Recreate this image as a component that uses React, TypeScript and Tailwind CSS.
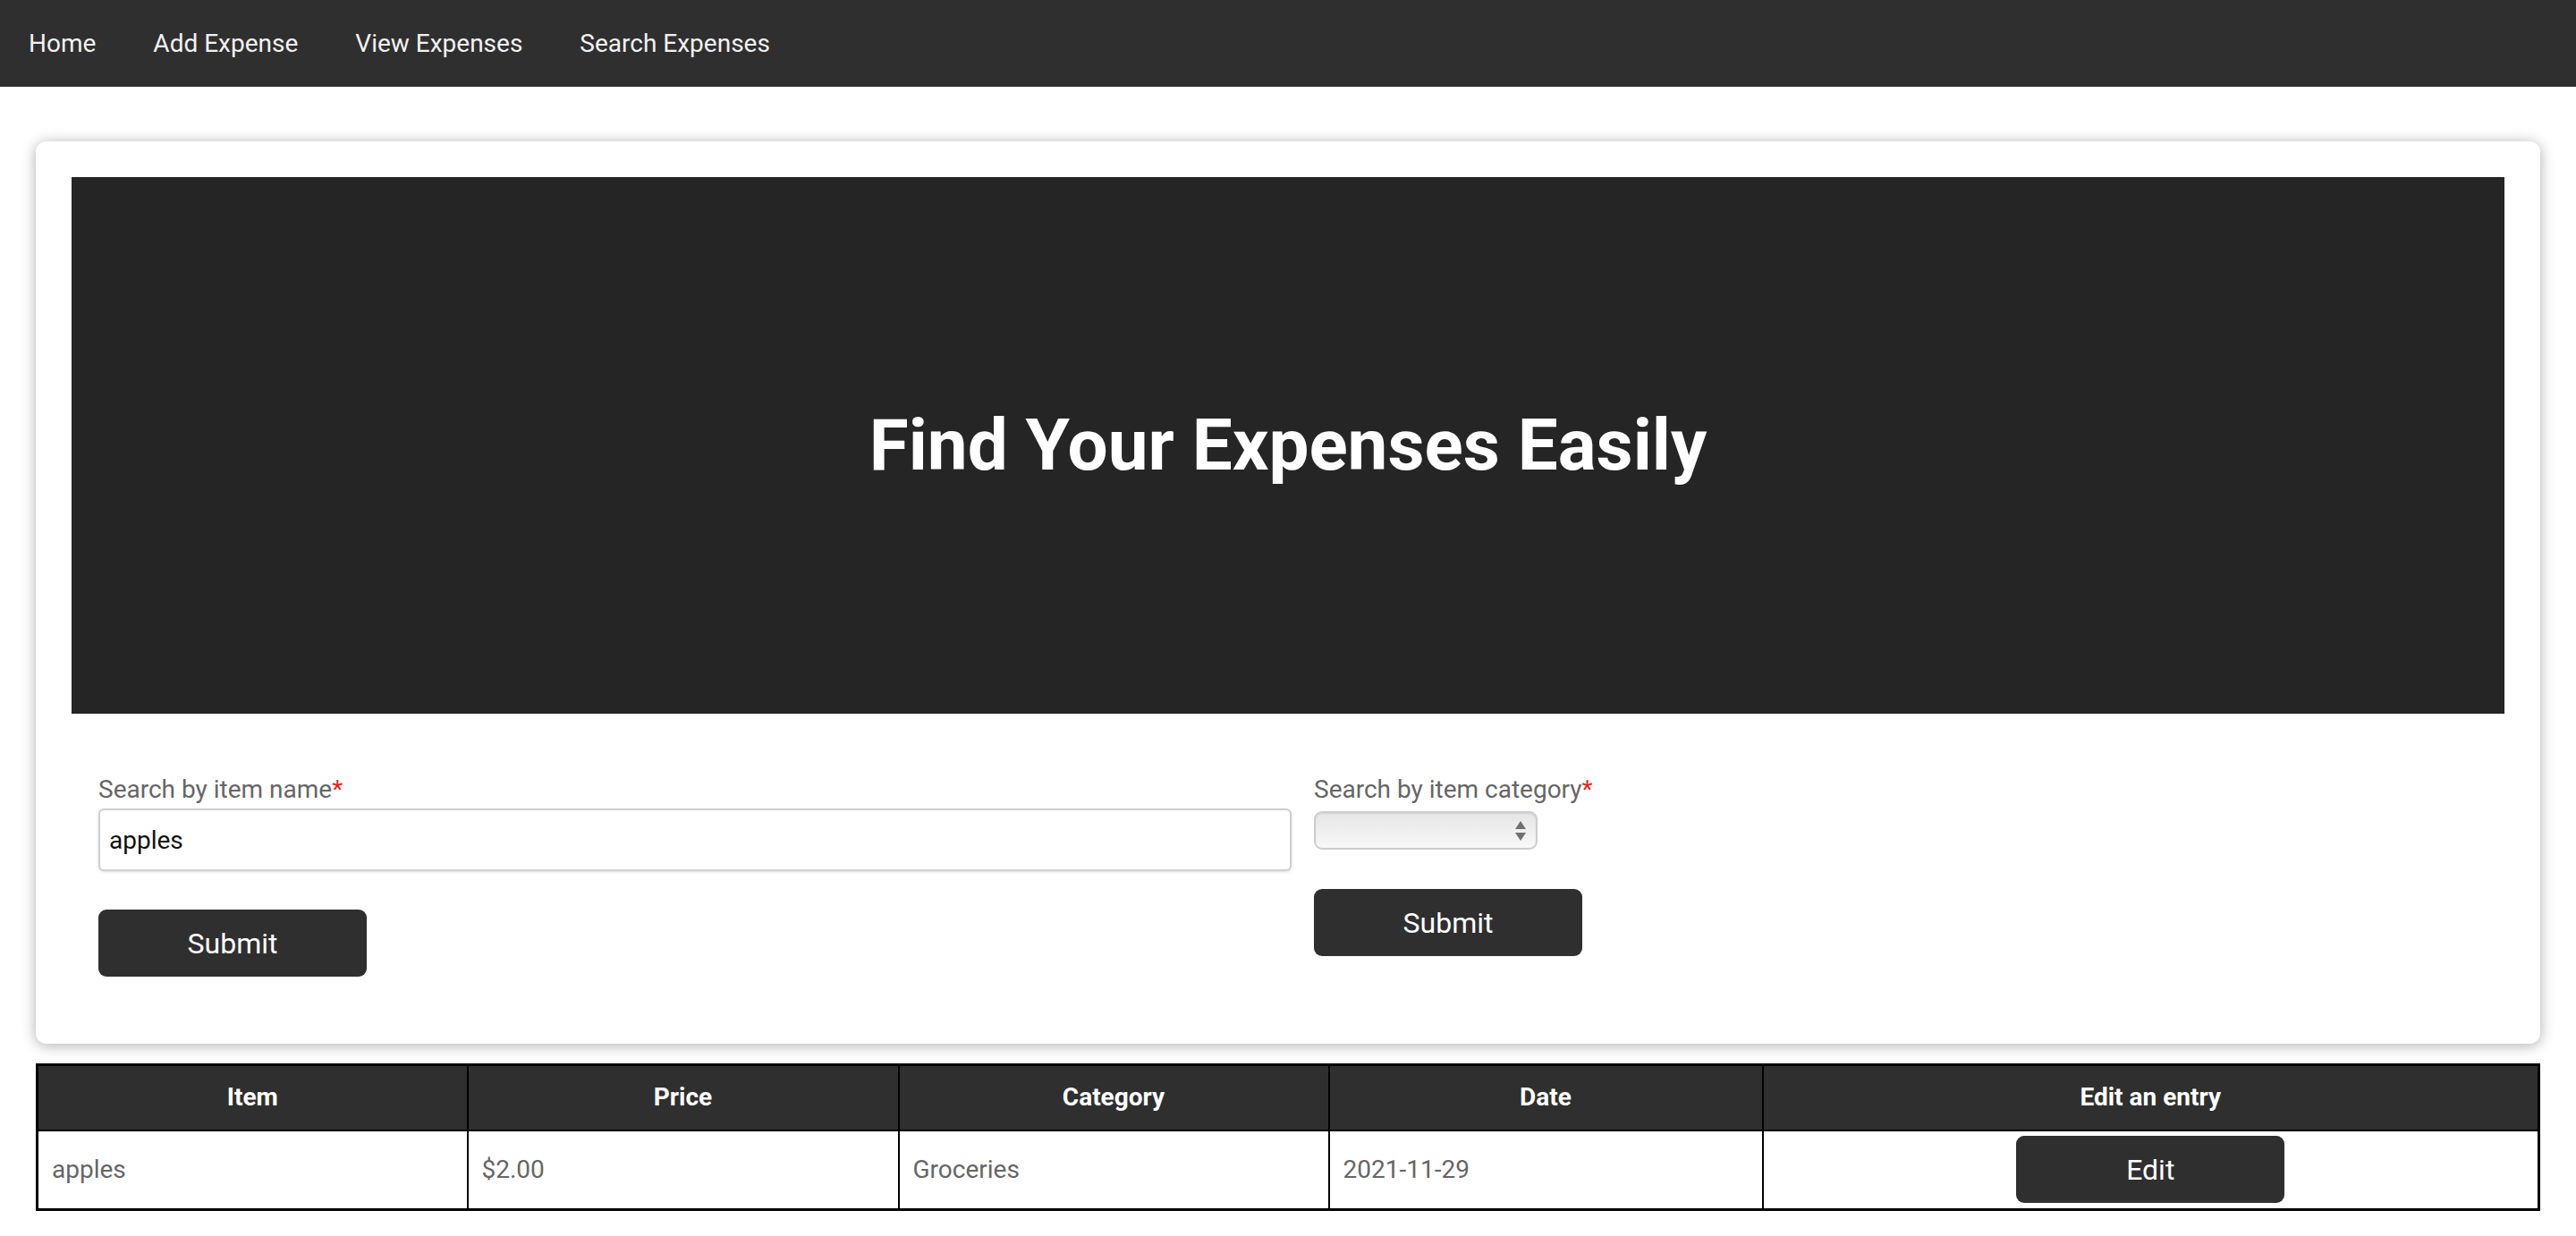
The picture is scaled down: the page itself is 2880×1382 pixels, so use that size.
import React from 'react';

const navLinks = ['Home', 'Add Expense', 'View Expenses', 'Search Expenses'];

const rows = [{ item: 'apples', price: '$2.00', category: 'Groceries', date: '2021-11-29' }];

const Required = () => <span className="text-[#e0261c]">*</span>;

const SubmitButton: React.FC<{ label: string }> = ({ label }) => (
    <button className="w-[300px] h-[75px] rounded-[9px] bg-[#2f2f2f] text-white text-[32px] leading-none">
        {label}
    </button>
);

export default function App() {
    return (
        <div className="min-h-screen bg-white font-['Roboto',sans-serif]">
            <nav className="h-[97px] bg-[#2f2f2f] flex items-center pl-[32px] gap-[64px]">
                {navLinks.map((l) => (
                    <a key={l} href="#" className="text-[28px] text-[#f2f2f2] leading-none">
                        {l}
                    </a>
                ))}
            </nav>

            <main className="px-[40px] pt-[61px]">
                <div className="bg-white rounded-[12px] shadow-[0_2px_16px_rgba(0,0,0,0.32)] p-[40px] pb-[75px]">
                    <div className="h-[600px] bg-[#252525] flex items-center justify-center">
                        <h1 className="text-[80px] font-bold text-white leading-none">Find Your Expenses Easily</h1>
                    </div>

                    <div className="flex pt-[68px] pl-[30px]">
                        <div className="w-[1359px] pr-[25px] flex flex-col items-start">
                            <label className="text-[28px] leading-[33px] text-[#666]">
                                Search by item name<Required />
                            </label>
                            <input
                                defaultValue="apples"
                                className="mt-[5px] w-full h-[70px] rounded-[6px] border-2 border-[#cfcfcf] shadow-[0_1px_3px_rgba(0,0,0,0.15)] px-[10px] text-[28px] text-[#111] outline-none"
                            />
                            <div className="mt-[43px]">
                                <SubmitButton label="Submit" />
                            </div>
                        </div>

                        <div className="flex-1 flex flex-col items-start">
                            <label className="text-[28px] leading-[33px] text-[#666]">
                                Search by item category<Required />
                            </label>
                            <div className="relative mt-[8px] w-[250px] h-[43px]">
                                <select className="appearance-none w-full h-full rounded-[9px] border-2 border-[#cdcdcd] bg-gradient-to-b from-[#e6e6e6] to-[#f8f8f8] shadow-[inset_0_1px_2px_rgba(0,0,0,0.08)] outline-none">
                                    <option></option>
                                </select>
                                <svg className="absolute right-[12px] top-[10px] pointer-events-none" width="14" height="24" viewBox="0 0 14 24">
                                    <polygon points="7,1 13,10 1,10" fill="#707070" />
                                    <polygon points="1,14 13,14 7,23" fill="#707070" />
                                </svg>
                            </div>
                            <div className="mt-[44px]">
                                <SubmitButton label="Submit" />
                            </div>
                        </div>
                    </div>
                </div>

                <table className="mt-[22px] w-full border-collapse border-[3px] border-black text-[28px]">
                    <colgroup>
                        <col className="w-[481px]" />
                        <col className="w-[482px]" />
                        <col className="w-[481px]" />
                        <col className="w-[485px]" />
                        <col />
                    </colgroup>
                    <thead>
                        <tr className="bg-[#2f2f2f] text-white h-[73px]">
                            {['Item', 'Price', 'Category', 'Date', 'Edit an entry'].map((h) => (
                                <th key={h} className="border-2 border-black font-bold text-center">
                                    {h}
                                </th>
                            ))}
                        </tr>
                    </thead>
                    <tbody>
                        {rows.map((r) => (
                            <tr key={r.item} className="h-[89px] text-[#666]">
                                <td className="border-2 border-black pl-[15px]">{r.item}</td>
                                <td className="border-2 border-black pl-[15px]">{r.price}</td>
                                <td className="border-2 border-black pl-[15px]">{r.category}</td>
                                <td className="border-2 border-black pl-[15px]">{r.date}</td>
                                <td className="border-2 border-black text-center">
                                    <button className="w-[300px] h-[75px] rounded-[9px] bg-[#2f2f2f] text-white text-[32px] leading-none">
                                        Edit
                                    </button>
                                </td>
                            </tr>
                        ))}
                    </tbody>
                </table>
            </main>
        </div>
    );
}
